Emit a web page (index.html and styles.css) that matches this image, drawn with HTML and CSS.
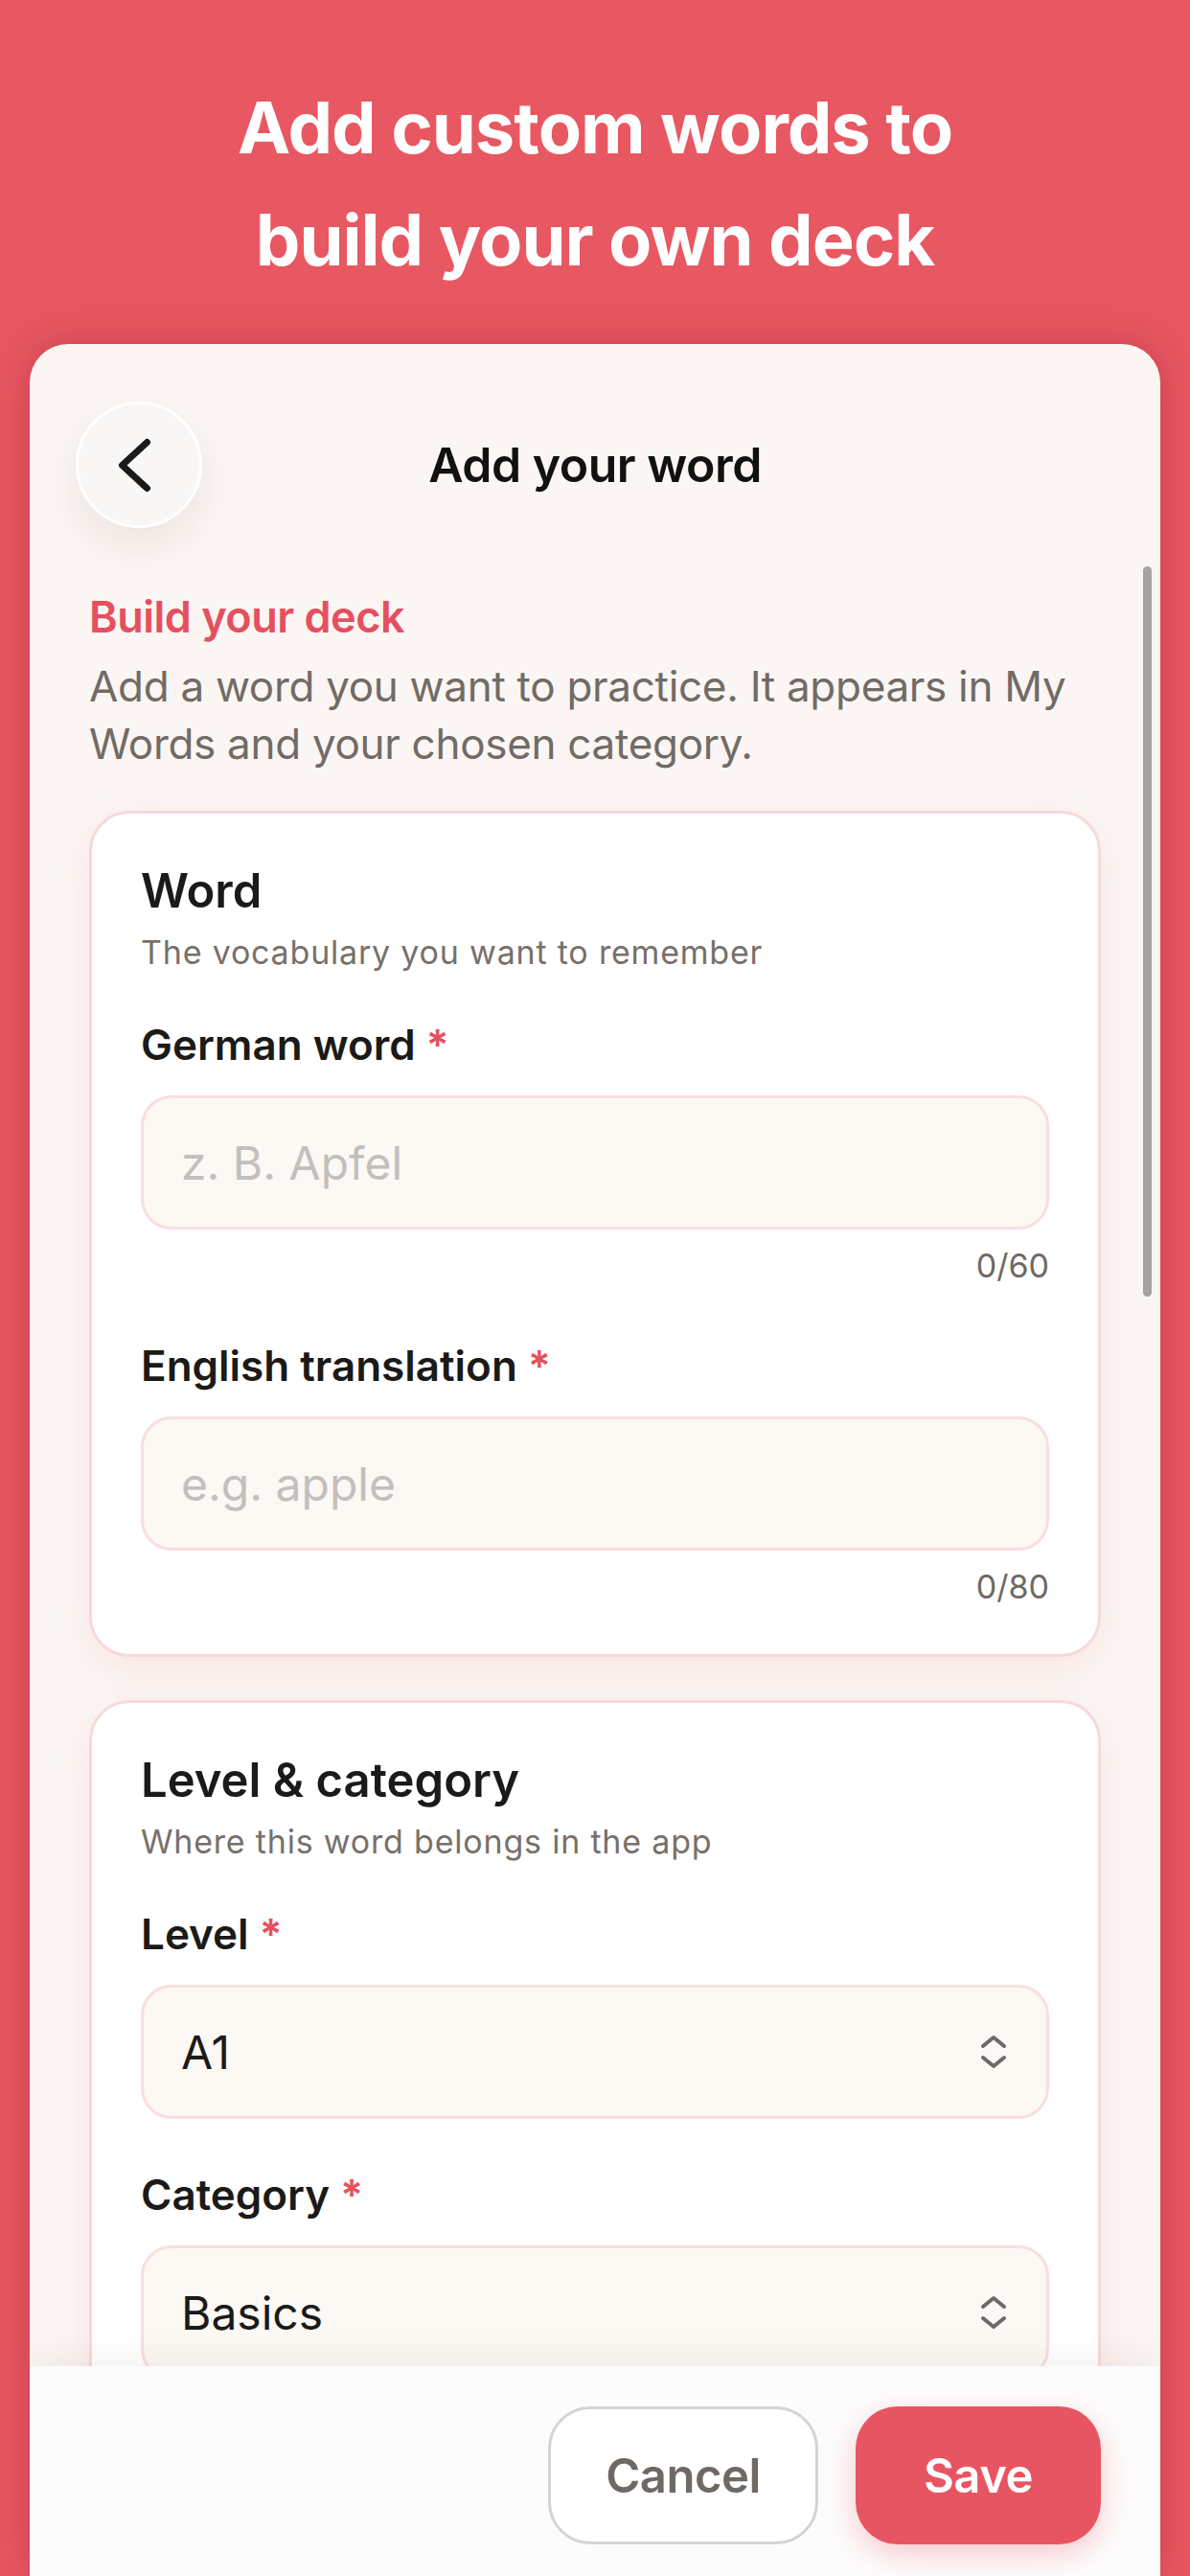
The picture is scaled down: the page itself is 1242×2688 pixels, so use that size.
FILE: index.html
```html
<!DOCTYPE html>
<html lang="en">
<head>
<meta charset="utf-8">
<title>Add your word</title>
<link rel="stylesheet" href="styles.css">
</head>
<body>
<main class="screen">
  <h1 class="promo">Add custom words to<br>build your own deck</h1>
  <section class="sheet">
    <header class="sheet-head">
      <button class="back" aria-label="Back">
        <svg viewBox="0 0 126 126" width="126" height="126"><polyline points="71.5,39.5 45.5,63.5 71.5,87.5" fill="none" stroke="#1b1a19" stroke-width="7" stroke-linecap="round" stroke-linejoin="round"/></svg>
      </button>
      <h2 class="sheet-title">Add your word</h2>
      <span class="head-spacer"></span>
    </header>
    <div class="scroll">
      <p class="eyebrow">Build your deck</p>
      <p class="intro">Add a word you want to practice. It appears in My Words and your chosen category.</p>

      <div class="panel">
        <h3 class="panel-title">Word</h3>
        <p class="panel-sub">The vocabulary you want to remember</p>
        <div class="field">
          <label class="label">German word <span class="req">*</span></label>
          <div class="input placeholder">z. B. Apfel</div>
          <div class="counter">0/60</div>
        </div>
        <div class="field field-next">
          <label class="label">English translation <span class="req">*</span></label>
          <div class="input placeholder">e.g. apple</div>
          <div class="counter">0/80</div>
        </div>
      </div>

      <div class="panel panel-2">
        <h3 class="panel-title">Level &amp; category</h3>
        <p class="panel-sub">Where this word belongs in the app</p>
        <div class="field">
          <label class="label">Level <span class="req">*</span></label>
          <div class="input select"><span>A1</span>
            <svg class="updown" viewBox="0 0 30 36" width="30" height="36"><polyline points="4,12 15,3 26,12" fill="none" stroke="#6f6965" stroke-width="4" stroke-linecap="round" stroke-linejoin="round"/><polyline points="4,24 15,33 26,24" fill="none" stroke="#6f6965" stroke-width="4" stroke-linecap="round" stroke-linejoin="round"/></svg>
          </div>
        </div>
        <div class="field field-select-next">
          <label class="label">Category <span class="req">*</span></label>
          <div class="input select"><span>Basics</span>
            <svg class="updown" viewBox="0 0 30 36" width="30" height="36"><polyline points="4,12 15,3 26,12" fill="none" stroke="#6f6965" stroke-width="4" stroke-linecap="round" stroke-linejoin="round"/><polyline points="4,24 15,33 26,24" fill="none" stroke="#6f6965" stroke-width="4" stroke-linecap="round" stroke-linejoin="round"/></svg>
          </div>
        </div>
      </div>
    </div>
    <div class="scrollbar"></div>
    <footer class="actions">
      <button class="btn btn-cancel">Cancel</button>
      <button class="btn btn-save">Save</button>
    </footer>
  </section>
</main>
</body>
</html>
```

FILE: styles.css
```css
* { box-sizing: border-box; }
html, body { margin: 0; padding: 0; }
body {
  width: 1242px;
  height: 2688px;
  overflow: hidden;
  background: #e85862;
  font-family: "Inter", "Noto Sans", sans-serif;
}
.screen {
  height: 2688px;
  display: flex;
  flex-direction: column;
}
.promo {
  margin: 75px 0 0;
  text-align: center;
  color: #ffffff;
  font-size: 74px;
  line-height: 117px;
  font-weight: 700;
  letter-spacing: -1px;
}
.sheet {
  position: relative;
  margin: 50px 31px 0;
  flex: 1;
  min-height: 0;
  background: #fbf6f3;
  border-radius: 40px 40px 0 0;
  box-shadow: 0 0 40px rgba(140, 20, 35, 0.35);
  display: flex;
  flex-direction: column;
  overflow: hidden;
}
.sheet-head {
  padding: 60px 48px 0;
  display: grid;
  grid-template-columns: 132px 1fr 132px;
  align-items: center;
}
.back {
  width: 132px;
  height: 132px;
  border-radius: 50%;
  border: 3px solid #ffffff;
  background: #f8f7f6;
  padding: 0;
  display: flex;
  align-items: center;
  justify-content: center;
  box-shadow: 0 18px 40px rgba(60, 30, 20, 0.08);
}
.back svg { display: block; }
.sheet-title {
  margin: 0;
  text-align: center;
  font-size: 50px;
  font-weight: 600;
  color: #111111;
  letter-spacing: -0.5px;
}
.scroll {
  flex: 1;
  min-height: 0;
  overflow: hidden;
  padding: 0 62px;
}
.eyebrow {
  margin: 65px 0 0;
  font-size: 45px;
  line-height: 56px;
  font-weight: 600;
  color: #e5505f;
  letter-spacing: -0.5px;
}
.intro {
  margin: 14px 0 0;
  font-size: 44px;
  line-height: 60px;
  color: #716b66;
  letter-spacing: -0.3px;
}
.panel {
  margin-top: 40px;
  background: #ffffff;
  border: 3px solid #f7d9db;
  border-radius: 42px;
  padding: 52px 51px 50px;
  box-shadow: 0 12px 40px rgba(232, 88, 98, 0.10);
}
.panel-2 { margin-top: 45px; }
.panel-title {
  margin: 0;
  font-size: 49px;
  line-height: 58px;
  font-weight: 600;
  color: #1b1a19;
  letter-spacing: 0;
}
.panel-sub {
  margin: 13px 0 0;
  font-size: 34px;
  line-height: 44px;
  color: #77706b;
  letter-spacing: 0.8px;
}
.field { margin-top: 48px; }
.field-next { margin-top: 58px; }
.field-select-next { margin-top: 53px; }
.label {
  display: block;
  font-size: 44px;
  line-height: 52px;
  font-weight: 600;
  color: #1b1a19;
  letter-spacing: 0;
}
.req { color: #e5505f; }
.input {
  margin-top: 27px;
  height: 140px;
  border: 3px solid #f8dfdf;
  border-radius: 32px;
  background: #fcf8f4;
  padding: 0 39px;
  display: flex;
  align-items: center;
  font-size: 48px;
  color: #1b1a19;
  letter-spacing: 0;
}
.placeholder { color: #c4bfbc; }
.select { justify-content: space-between; padding-right: 40px; }
.updown { display: block; }
.counter {
  margin-top: 18px;
  text-align: right;
  font-size: 34px;
  line-height: 40px;
  color: #6f6965;
}
.scrollbar {
  position: absolute;
  right: 9px;
  top: 232px;
  width: 9px;
  height: 762px;
  border-radius: 5px;
  background: #a5a2a0;
}
.actions {
  height: 219px;
  flex: none;
  background: #fdfcfc;
  padding: 42px 62px 33px;
  display: flex;
  justify-content: flex-end;
  gap: 39px;
  box-shadow: 0 -12px 30px rgba(60, 30, 20, 0.05);
  position: relative;
}
.btn {
  height: 144px;
  border-radius: 44px;
  font-family: "Inter", "Noto Sans", sans-serif;
  font-size: 49px;
  font-weight: 600;
  letter-spacing: -0.5px;
  padding: 0;
}
.btn-cancel {
  width: 282px;
  background: #ffffff;
  border: 3px solid #d6d3d1;
  color: #6f6965;
}
.btn-save {
  width: 256px;
  background: #e85562;
  border: none;
  color: #ffffff;
  box-shadow: 0 10px 30px rgba(232, 85, 98, 0.3);
}
```
